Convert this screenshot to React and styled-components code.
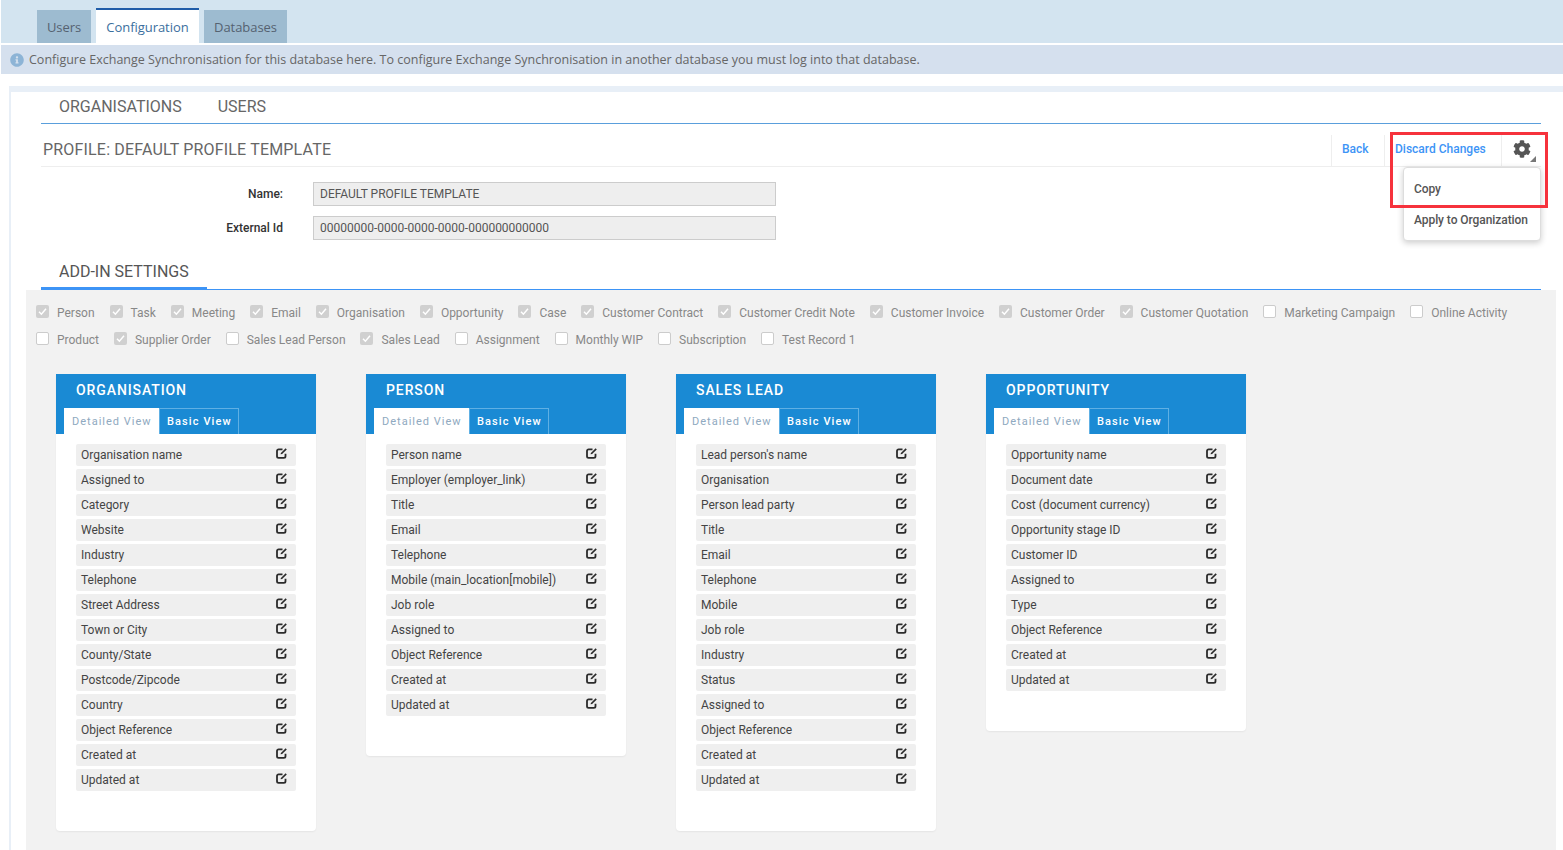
import React from "react";
import styled, { createGlobalStyle } from "styled-components";
import { FaInfoCircle, FaCog } from "react-icons/fa";

const checks = [
  ["Person", true], ["Task", true], ["Meeting", true], ["Email", true], ["Organisation", true],
  ["Opportunity", true], ["Case", true], ["Customer Contract", true], ["Customer Credit Note", true],
  ["Customer Invoice", true], ["Customer Order", true], ["Customer Quotation", true],
  ["Marketing Campaign", false], ["Online Activity", false], ["Product", false], ["Supplier Order", true],
  ["Sales Lead Person", false], ["Sales Lead", true], ["Assignment", false], ["Monthly WIP", false],
  ["Subscription", false], ["Test Record 1", false],
];

const cards = [
  {
    title: "ORGANISATION",
    rows: ["Organisation name", "Assigned to", "Category", "Website", "Industry", "Telephone", "Street Address", "Town or City", "County/State", "Postcode/Zipcode", "Country", "Object Reference", "Created at", "Updated at"],
  },
  {
    title: "PERSON",
    rows: ["Person name", "Employer (employer_link)", "Title", "Email", "Telephone", "Mobile (main_location[mobile])", "Job role", "Assigned to", "Object Reference", "Created at", "Updated at"],
  },
  {
    title: "SALES LEAD",
    rows: ["Lead person's name", "Organisation", "Person lead party", "Title", "Email", "Telephone", "Mobile", "Job role", "Industry", "Status", "Assigned to", "Object Reference", "Created at", "Updated at"],
  },
  {
    title: "OPPORTUNITY",
    rows: ["Opportunity name", "Document date", "Cost (document currency)", "Opportunity stage ID", "Customer ID", "Assigned to", "Type", "Object Reference", "Created at", "Updated at"],
  },
];

function EditIcon() {
  return (
    <EditSvg viewBox="0 0 12 12">
      <path d="M6.500 2.300H2.600C1.700 2.300 1 3 1 3.900v5.300C1 10.100 1.700 10.800 2.600 10.800h5.300c.9 0 1.600-.7 1.600-1.600V6.800" fill="none" stroke="#2b2b2b" strokeWidth="1.800" />
      <path d="M4.600 7.200 L4.900 5.900 L9.600 1.200 L10.800 2.400 L6.100 7.100 Z" fill="#2b2b2b" />
    </EditSvg>
  );
}

function App() {
  return (
    <Page>
      <GlobalStyle />
      <TopBar>
        <TopTab $width="54px">Users</TopTab>
        <TopTab $width="103px" $active>Configuration</TopTab>
        <TopTab $width="83px">Databases</TopTab>
      </TopBar>
      <InfoBar>
        <FaInfoCircle size={14} color="#8db4d6" />
        Configure Exchange Synchronisation for this database here. To configure Exchange Synchronisation in another database you must log into that database.
      </InfoBar>
      <Frame>
        <Content>
          <SubNav>
            <span>ORGANISATIONS</span>
            <span>USERS</span>
          </SubNav>
          <ProfileHead>
            <ProfileTitle>PROFILE: DEFAULT PROFILE TEMPLATE</ProfileTitle>
            <HeadAction $width="53px">Back</HeadAction>
            <HeadAction $width="117px">Discard Changes</HeadAction>
            <GearCell>
              <FaCog size={18} color="#555" />
              <GearCorner />
            </GearCell>
            <PopupMenu>
              <li>Copy</li>
              <li>Apply to Organization</li>
            </PopupMenu>
            <Highlight />
          </ProfileHead>
          <FormGrid>
            <label>Name:</label>
            <ReadOnlyField>DEFAULT PROFILE TEMPLATE</ReadOnlyField>
            <label>External Id</label>
            <ReadOnlyField>00000000-0000-0000-0000-000000000000</ReadOnlyField>
          </FormGrid>
          <SectionHead>
            <span>ADD-IN SETTINGS</span>
          </SectionHead>
        </Content>
        <Settings>
          <CheckList>
            {checks.map(([name, on]) => (
              <CheckItem key={name}>
                <CheckBox $on={on}>
                  {on && (
                    <svg viewBox="0 0 13 13" width="13" height="13">
                      <path d="M3 6.800 L5.400 9.200 L10 3.800" fill="none" stroke="#fff" strokeWidth="1.500" />
                    </svg>
                  )}
                </CheckBox>
                {name}
              </CheckItem>
            ))}
          </CheckList>
          <Cards>
            {cards.map((card) => (
              <Card key={card.title}>
                <CardHead>
                  <CardTitle>{card.title}</CardTitle>
                  <ViewTabs>
                    <ViewTab $width="95px" $active>Detailed View</ViewTab>
                    <ViewTab $width="80px">Basic View</ViewTab>
                  </ViewTabs>
                </CardHead>
                <FieldList>
                  {card.rows.map((row) => (
                    <FieldRow key={row}>
                      {row}
                      <EditIcon />
                    </FieldRow>
                  ))}
                </FieldList>
              </Card>
            ))}
          </Cards>
        </Settings>
      </Frame>
    </Page>
  );
}

const GlobalStyle = createGlobalStyle`
  html, body {
    margin: 0;
    padding: 0;
    height: 100%;
    overflow: hidden;
    background: #fff;
  }
  * {
    box-sizing: border-box;
  }
`;

const Page = styled.div`
  height: 850px;
  overflow: hidden;
  font-family: Roboto, "Liberation Sans", sans-serif;
  color: #555;
`;

const TopBar = styled.div`
  height: 43px;
  margin-left: 1px;
  padding-left: 36px;
  background-color: #d3e4f0;
  display: flex;
  align-items: flex-end;
  gap: 5px;
`;

const TopTab = styled.div`
  width: ${(p) => p.$width};
  height: ${(p) => (p.$active ? "35px" : "33px")};
  display: flex;
  align-items: center;
  justify-content: center;
  font-family: "Open Sans", sans-serif;
  font-size: 13px;
  letter-spacing: -0.05px;
  color: ${(p) => (p.$active ? "#3b6f9e" : "#556270")};
  background-color: ${(p) => (p.$active ? "#fff" : "#9dbbd0")};
  border-top: ${(p) => (p.$active ? "2px solid #1f5ca8" : "none")};
`;

const InfoBar = styled.div`
  height: 29px;
  margin: 2px 0 12px 1px;
  padding-left: 9px;
  background-color: #d5e0ee;
  display: flex;
  align-items: center;
  gap: 5px;
  font-family: "Open Sans", sans-serif;
  font-size: 12.500px;
  color: #666;
`;

const Frame = styled.div`
  margin-left: 9px;
  border-top: 6px solid #e8eff7;
  border-left: 2px solid #e8eff7;
  background-color: #fff;
`;

const Content = styled.div`
  padding: 0 22px 0 30px;
`;

const SubNav = styled.div`
  height: 32px;
  padding: 0 0 2px 18px;
  display: flex;
  align-items: center;
  gap: 36px;
  border-bottom: 1px solid #5a9fdc;
  font-size: 16px;
  color: #666;
`;

const ProfileHead = styled.div`
  position: relative;
  height: 43px;
  padding-top: 11px;
  display: flex;
  border-bottom: 1px solid #eee;
`;

const ProfileTitle = styled.h1`
  margin: -3px auto 0 2px;
  align-self: center;
  font-size: 16px;
  letter-spacing: 0.18px;
  font-weight: 400;
  color: #666;
`;

const HeadAction = styled.div`
  width: ${(p) => p.$width};
  padding: 0 0 3px 10px;
  display: flex;
  align-items: center;
  border-left: 1px solid #eee;
  font-size: 12px;
  font-weight: 500;
  color: #3d94f6;
`;

const GearCell = styled.div`
  position: relative;
  width: 40px;
  padding: 0 0 3px 11px;
  display: flex;
  align-items: center;
  border-left: 1px solid #eee;
`;

const GearCorner = styled.i`
  position: absolute;
  right: 5px;
  bottom: 4px;
  width: 0;
  height: 0;
  border-style: solid;
  border-width: 0 0 6px 6px;
  border-color: transparent transparent #777 transparent;
`;

const PopupMenu = styled.ul`
  position: absolute;
  top: 43px;
  right: 0;
  width: 138px;
  height: 74px;
  margin: 0;
  padding: 5px 0 0;
  list-style: none;
  background: #fff;
  border: 1px solid #ddd;
  border-radius: 4px;
  box-shadow: 0 2px 6px rgba(0, 0, 0, 0.2);
  font-size: 12px;
  letter-spacing: -0.07px;
  font-weight: 500;
  color: #555;

  li {
    height: 31px;
    padding-left: 10px;
    display: flex;
    align-items: center;
  }
`;

const Highlight = styled.div`
  position: absolute;
  top: 8px;
  right: -7px;
  width: 158px;
  height: 76px;
  border: 3px solid #f6323c;
  pointer-events: none;
`;

const FormGrid = styled.div`
  padding: 15px 0 0 0;
  display: grid;
  grid-template-columns: 242px 463px;
  column-gap: 30px;
  row-gap: 10px;
  align-items: center;

  label {
    text-align: right;
    font-size: 12px;
    font-weight: 500;
    color: #333;
  }
`;

const ReadOnlyField = styled.div`
  height: 24px;
  padding-left: 6px;
  display: flex;
  align-items: center;
  background-color: #eee;
  border: 1px solid #ccc;
  font-size: 12px;
  color: #555;
`;

const SectionHead = styled.div`
  margin-top: 21px;
  height: 29px;
  border-bottom: 1px solid #3d94f6;
  font-size: 16px;
  color: #555;

  span {
    display: block;
    width: 166px;
    height: 29px;
    padding: 1px 0 0 18px;
    line-height: 20px;
    border-bottom: 3px solid #3d94f6;
  }
`;

const Settings = styled.div`
  margin: 0 7px 0 15px;
  padding: 14px 10px 0;
  min-height: 560px;
  background-color: #f2f2f2;
`;

const CheckList = styled.div`
  display: flex;
  flex-wrap: wrap;
  column-gap: 14.960px;
  row-gap: 9px;
`;

const CheckItem = styled.div`
  height: 18px;
  display: flex;
  align-items: center;
  gap: 8px;
  font-size: 12px;
  color: #888;
`;

const CheckBox = styled.span`
  width: 13px;
  height: 13px;
  margin-top: -3px;
  border-radius: 2px;
  border: ${(p) => (p.$on ? "none" : "1px solid #ccc")};
  background-color: ${(p) => (p.$on ? "#d0d0d0" : "#fff")};
  display: block;
`;

const Cards = styled.div`
  margin: 25px 0 0 20px;
  display: flex;
  align-items: flex-start;
  gap: 50px;
`;

const Card = styled.section`
  width: 260px;
  padding-bottom: 40px;
  background-color: #fff;
  border-radius: 0 0 4px 4px;
  box-shadow: 0 1px 2px rgba(0, 0, 0, 0.06);
`;

const CardHead = styled.header`
  height: 60px;
  padding-top: 8px;
  display: flex;
  flex-direction: column;
  justify-content: space-between;
  background-color: #1a8ad4;
`;

const CardTitle = styled.h2`
  margin: 0;
  padding-left: 20px;
  font-size: 14px;
  line-height: 17px;
  font-weight: 500;
  letter-spacing: 0.900px;
  color: #fff;
`;

const ViewTabs = styled.div`
  margin-left: 8px;
  display: flex;
`;

const ViewTab = styled.div`
  width: ${(p) => p.$width};
  height: 26px;
  padding-left: ${(p) => (p.$active ? "8px" : "7px")};
  display: flex;
  align-items: center;
  font-size: 11px;
  letter-spacing: ${(p) => (p.$active ? "1px" : "1.100px")};
  white-space: nowrap;
  font-weight: ${(p) => (p.$active ? 400 : 500)};
  color: ${(p) => (p.$active ? "#8fa9c0" : "#fff")};
  background-color: ${(p) => (p.$active ? "#fff" : "transparent")};
  border: ${(p) => (p.$active ? "none" : "1px solid #5fb0e4")};
  border-bottom: none;
`;

const FieldList = styled.div`
  padding: 10px 20px 0;
  display: flex;
  flex-direction: column;
  gap: 3px;
`;

const FieldRow = styled.div`
  height: 22px;
  padding: 0 8px 0 5px;
  display: flex;
  align-items: center;
  justify-content: space-between;
  background-color: #efefef;
  border-radius: 2px;
  font-size: 12px;
  color: #444;
`;

const EditSvg = styled.svg`
  width: 12px;
  height: 12px;
  margin: -4px 0 0 0;
`;

export default App;
